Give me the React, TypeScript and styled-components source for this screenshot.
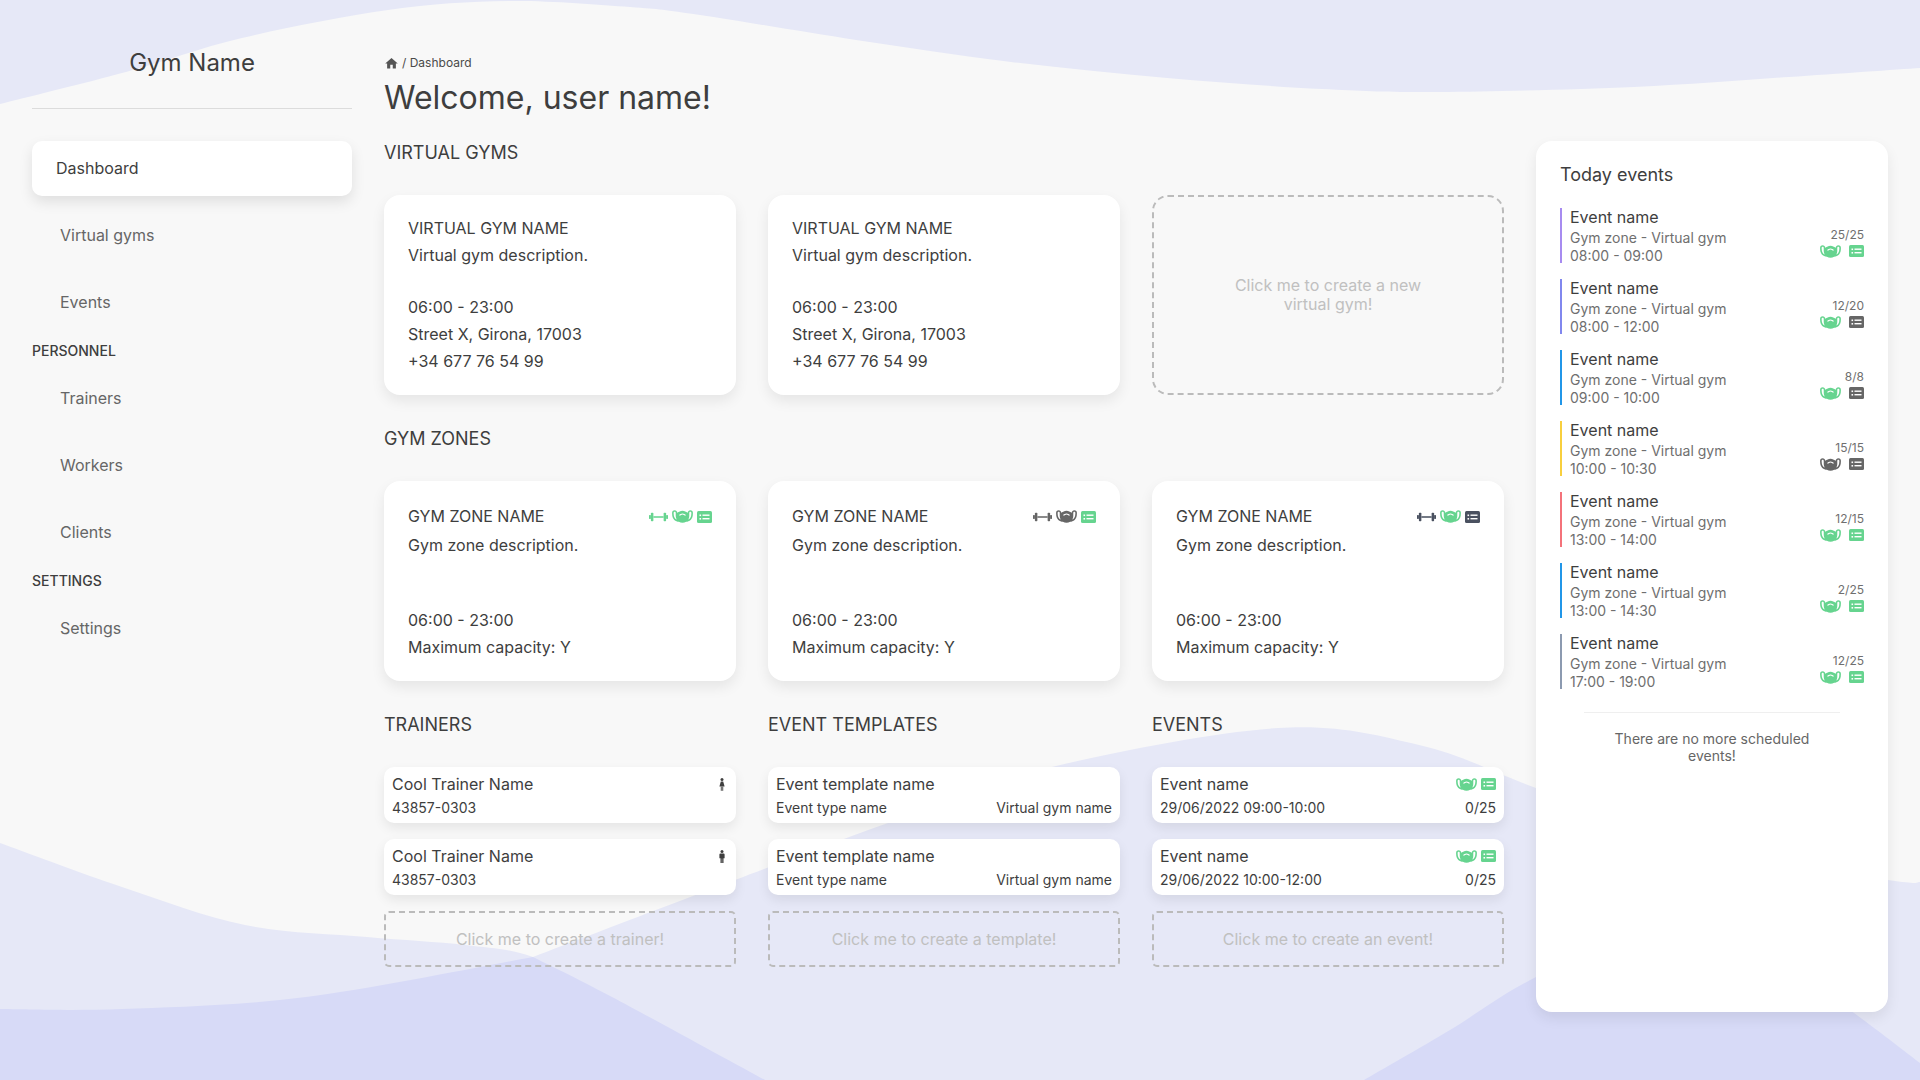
import styled, { createGlobalStyle } from "styled-components";
import { MdHome, MdMasks } from "react-icons/md";

const GREEN = "#66d48f";
const GREY = "#666666";
const SLATE = "#4a5160";

type Point = [number, number];

// turns a list of points into a smooth line, the waves are traced from the screenshot
function smooth(points: Point[]) {
  let d = `M${points[0][0]} ${points[0][1]}`;
  for (let i = 0; i < points.length - 1; i++) {
    const p0 = points[i - 1] || points[i];
    const p1 = points[i];
    const p2 = points[i + 1];
    const p3 = points[i + 2] || p2;
    const c1x = p1[0] + (p2[0] - p0[0]) / 6;
    const c1y = p1[1] + (p2[1] - p0[1]) / 6;
    const c2x = p2[0] - (p3[0] - p1[0]) / 6;
    const c2y = p2[1] - (p3[1] - p1[1]) / 6;
    d += ` C${c1x} ${c1y} ${c2x} ${c2y} ${p2[0]} ${p2[1]}`;
  }
  return d;
}

const topWave: Point[] = [
  [0, 104], [126, 72], [242, 38], [388, 10], [509, 1], [630, 7], [700, 15], [856, 40],
  [1011, 62], [1167, 78], [1322, 89], [1439, 92], [1634, 87], [1789, 77], [1920, 68],
];
const leftWave: Point[] = [
  [0, 843], [122, 887], [245, 925], [367, 937], [465, 945], [533, 957], [612, 997], [765, 1080],
];
const riseLeft: Point[] = [[0, 1009], [122, 1009], [306, 997], [533, 957]];
const riseRight: Point[] = [
  [533, 957], [735, 880], [888, 823], [1052, 767], [1278, 728], [1419, 745], [1536, 788],
  [1700, 850], [1888, 880], [1920, 882],
];
const darkRight: Point[] = [[1364, 1080], [1450, 1030], [1536, 977], [1700, 900], [1854, 1013], [1920, 1063]];

const GlobalStyle = createGlobalStyle`
  html, body {
    margin: 0;
    padding: 0;
    background: #f8f8f8;
  }
  body {
    font-family: "Inter", "Liberation Sans", sans-serif;
    color: #3e3e3e;
  }
  * {
    box-sizing: border-box;
  }
`;

const Page = styled.div`
  position: relative;
  width: 1920px;
  height: 1080px;
  overflow: hidden;
  display: flex;
  gap: 32px;
  padding: 0 32px;
`;

const Waves = styled.svg`
  position: absolute;
  top: 0;
  left: 0;
`;

// sidebar
const Sidebar = styled.aside`
  position: relative;
  width: 320px;
  padding-top: 48px;
`;

const Brand = styled.h1`
  margin: 0;
  font-size: 24px;
  line-height: 30px;
  font-weight: 400;
  text-align: center;
`;

const Divider = styled.hr`
  margin: 30px 0 32px;
  border: none;
  height: 1px;
  background: #dcdcdc;
`;

const NavItem = styled.div<{ $active?: boolean }>`
  height: 55px;
  margin-bottom: 12px;
  display: flex;
  align-items: center;
  font-size: 16px;
  padding-bottom: 1px;
  padding-left: ${(p) => (p.$active ? "24px" : "28px")};
  color: ${(p) => (p.$active ? "#3e3e3e" : "#666666")};
  background: ${(p) => (p.$active ? "#ffffff" : "transparent")};
  border-radius: ${(p) => (p.$active ? "10px" : "0")};
  box-shadow: ${(p) => (p.$active ? "0 6px 14px rgba(0, 0, 0, 0.1)" : "none")};
`;

const NavHeading = styled.div`
  font-size: 14px;
  line-height: 18px;
  font-weight: 500;
  margin: 0 0 11px;
`;

// main column
const Main = styled.main`
  position: relative;
  width: 1120px;
  padding-top: 55px;
`;

const Breadcrumb = styled.div`
  display: flex;
  align-items: center;
  gap: 3px;
  font-size: 12px;
  line-height: 16px;
  color: #4a4a4a;
`;

const Title = styled.h2`
  margin: 7px 0 23px;
  font-size: 32px;
  line-height: 40px;
  font-weight: 400;
`;

const SectionTitle = styled.h3`
  margin: 0 0 30px;
  font-size: 18px;
  line-height: 24px;
  font-weight: 400;
`;

const Grid = styled.div`
  display: grid;
  grid-template-columns: repeat(3, 352px);
  column-gap: 32px;
  margin-bottom: 32px;
`;

const Card = styled.div<{ $zone?: boolean }>`
  height: 200px;
  padding: ${(p) => (p.$zone ? "22px 24px 0" : "20px 24px 0")};
  background: #ffffff;
  border-radius: 16px;
  box-shadow: 0 6px 14px rgba(0, 0, 0, 0.08);
  font-size: 16px;
  line-height: 27px;
`;

const CardHead = styled.div`
  display: flex;
  justify-content: space-between;
  align-items: center;
  height: 27px;
  margin-bottom: 2px;
`;

const CardGap = styled.div<{ $size: number }>`
  height: ${(p) => p.$size}px;
`;

const AddCard = styled.div`
  height: 200px;
  display: flex;
  align-items: center;
  justify-content: center;
  padding: 0 80px;
  border: 2px dashed #bbbbbb;
  border-radius: 16px;
  color: #c0c0c0;
  font-size: 16px;
  line-height: 19px;
  text-align: center;
`;

const IconRow = styled.div<{ $gap?: number }>`
  display: flex;
  align-items: center;
  gap: ${(p) => p.$gap ?? 2}px;
`;

const Column = styled.div`
  display: flex;
  flex-direction: column;
`;

const Row = styled.div`
  height: 56px;
  margin-bottom: 16px;
  padding: 6px 8px 0;
  background: #ffffff;
  border-radius: 10px;
  box-shadow: 0 5px 12px rgba(0, 0, 0, 0.08);
`;

const RowLine = styled.div<{ $small?: boolean }>`
  display: flex;
  justify-content: space-between;
  align-items: center;
  font-size: ${(p) => (p.$small ? "14px" : "16px")};
  height: 22px;
  margin-bottom: ${(p) => (p.$small ? "0" : "1px")};
`;

const AddRow = styled.div`
  height: 56px;
  display: flex;
  align-items: center;
  justify-content: center;
  border: 2px dashed #bbbbbb;
  border-radius: 5px;
  color: #c0c0c0;
  font-size: 16px;
`;

const PersonIcon = styled.svg`
  margin-right: 3px;
`;

// today events
const Panel = styled.aside`
  position: relative;
  width: 352px;
  height: 871px;
  margin-top: 141px;
  padding: 22px 24px 0;
  background: #ffffff;
  border-radius: 16px;
  box-shadow: 0 6px 14px rgba(0, 0, 0, 0.08);
`;

const PanelTitle = styled.h3`
  margin: 0 0 21px;
  font-size: 18px;
  line-height: 24px;
  font-weight: 400;
`;

const TodayEvent = styled.div<{ $color: string }>`
  height: 55px;
  margin-bottom: 16px;
  padding-left: 8px;
  border-left: 2px solid ${(p) => p.$color};
  display: flex;
  justify-content: space-between;
`;

const EventName = styled.div`
  font-size: 16px;
  line-height: 19px;
  margin-bottom: 2px;
`;

const EventMeta = styled.div`
  font-size: 14px;
  line-height: 18px;
  color: #6f6f6f;
`;

const EventRight = styled.div`
  display: flex;
  flex-direction: column;
  align-items: flex-end;
  justify-content: flex-end;
  padding-bottom: 4px;
  font-size: 12px;
  line-height: 16px;
  color: #6f6f6f;
`;

const EventIcons = styled(IconRow)`
  height: 16px;
`;

const PanelDivider = styled.hr`
  margin: 23px 24px 0;
  border: none;
  height: 1px;
  background: #efefef;
`;

const PanelNote = styled.p`
  margin: 17px 40px 0;
  font-size: 14px;
  line-height: 17px;
  color: #666666;
  text-align: center;
`;

function Dumbbell({ color }: { color: string }) {
  return (
    <svg width="19" height="12" viewBox="0 0 20 12" fill={color}>
      <rect x="0" y="4" width="2" height="4" rx="0.6" />
      <rect x="2" y="1.5" width="2.6" height="9" rx="0.8" />
      <rect x="4.6" y="5.2" width="10.8" height="1.6" />
      <rect x="15.4" y="1.5" width="2.6" height="9" rx="0.8" />
      <rect x="18" y="4" width="2" height="4" rx="0.6" />
    </svg>
  );
}

const Mask = ({ color }: { color: string }) => <MdMasks size={25} color={color} />;

// filled card with two dotted lines
function List({ color }: { color: string }) {
  return (
    <svg width="15" height="12" viewBox="0 0 15 12">
      <rect width="15" height="12" rx="1.5" fill={color} />
      <rect x="2.5" y="3.5" width="1.6" height="1.6" fill="#ffffff" />
      <rect x="5.5" y="3.5" width="7" height="1.4" fill="#ffffff" />
      <rect x="2.5" y="7" width="1.6" height="1.6" fill="#ffffff" />
      <rect x="5.5" y="7" width="7" height="1.4" fill="#ffffff" />
    </svg>
  );
}

function Woman() {
  return (
    <PersonIcon width="6" height="13" viewBox="0 0 6 13" fill="#3e3e3e">
      <circle cx="3" cy="1.6" r="1.5" />
      <path d="M3 3.4 L4.2 3.6 L5.6 8.6 L0.4 8.6 L1.8 3.6 Z" />
      <rect x="1.8" y="8.6" width="0.9" height="4.2" />
      <rect x="3.3" y="8.6" width="0.9" height="4.2" />
    </PersonIcon>
  );
}

function Man() {
  return (
    <PersonIcon width="6" height="13" viewBox="0 0 6 13" fill="#3e3e3e">
      <circle cx="3" cy="1.6" r="1.5" />
      <path d="M1.4 3.4 H4.6 Q5.6 3.4 5.6 4.4 V8.2 H4.5 V13 H3.2 V8.6 H2.8 V13 H1.5 V8.2 H0.4 V4.4 Q0.4 3.4 1.4 3.4 Z" />
    </PersonIcon>
  );
}

const zones = [
  { dumbbell: GREEN, mask: GREEN, list: GREEN },
  { dumbbell: GREY, mask: GREY, list: GREEN },
  { dumbbell: SLATE, mask: GREEN, list: SLATE },
];

const todayEvents = [
  { bar: "#a78bf0", time: "08:00 - 09:00", count: "25/25", mask: GREEN, list: GREEN },
  { bar: "#8187ee", time: "08:00 - 12:00", count: "12/20", mask: GREEN, list: GREY },
  { bar: "#2196e8", time: "09:00 - 10:00", count: "8/8", mask: GREEN, list: GREY },
  { bar: "#f8cf3e", time: "10:00 - 10:30", count: "15/15", mask: GREY, list: GREY },
  { bar: "#f4727a", time: "13:00 - 14:00", count: "12/15", mask: GREEN, list: GREEN },
  { bar: "#2196e8", time: "13:00 - 14:30", count: "2/25", mask: GREEN, list: GREEN },
  { bar: "#8c9ab0", time: "17:00 - 19:00", count: "12/25", mask: GREEN, list: GREEN },
];

export default function App() {
  return (
    <Page>
      <GlobalStyle />
      <Waves width="1920" height="1080" viewBox="0 0 1920 1080">
        <path d={`${smooth(topWave)} L1920 0 L0 0 Z`} fill="#e6e8f7" />
        <path d={`${smooth(leftWave)} L0 1080 Z`} fill="#e6e8f7" />
        <path d={`${smooth(riseLeft)} ${smooth(riseRight).replace(/^M[^C]+/, "")} L1920 1080 L0 1080 Z`} fill="#e6e8f7" />
        <path d={`${smooth(riseLeft)} ${smooth([[533, 957], [612, 997], [765, 1080]]).replace(/^M[^C]+/, "")} L0 1080 Z`} fill="#d7daf7" />
        <path d={`${smooth(darkRight)} L1920 1080 Z`} fill="#d7daf7" />
      </Waves>

      <Sidebar>
        <Brand>Gym Name</Brand>
        <Divider />
        <NavItem $active>Dashboard</NavItem>
        <NavItem>Virtual gyms</NavItem>
        <NavItem>Events</NavItem>
        <NavHeading>PERSONNEL</NavHeading>
        <NavItem>Trainers</NavItem>
        <NavItem>Workers</NavItem>
        <NavItem>Clients</NavItem>
        <NavHeading>SETTINGS</NavHeading>
        <NavItem>Settings</NavItem>
      </Sidebar>

      <Main>
        <Breadcrumb>
          <MdHome size={15} color="#555555" />
          <span>/ Dashboard</span>
        </Breadcrumb>
        <Title>Welcome, user name!</Title>

        <SectionTitle>VIRTUAL GYMS</SectionTitle>
        <Grid>
          {[0, 1].map((i) => (
            <Card key={i}>
              <div>VIRTUAL GYM NAME</div>
              <div>Virtual gym description.</div>
              <CardGap $size={25} />
              <div>06:00 - 23:00</div>
              <div>Street X, Girona, 17003</div>
              <div>+34 677 76 54 99</div>
            </Card>
          ))}
          <AddCard>Click me to create a new virtual gym!</AddCard>
        </Grid>

        <SectionTitle>GYM ZONES</SectionTitle>
        <Grid>
          {zones.map((zone, i) => (
            <Card key={i} $zone>
              <CardHead>
                <span>GYM ZONE NAME</span>
                <IconRow>
                  <Dumbbell color={zone.dumbbell} />
                  <Mask color={zone.mask} />
                  <List color={zone.list} />
                </IconRow>
              </CardHead>
              <div>Gym zone description.</div>
              <CardGap $size={48} />
              <div>06:00 - 23:00</div>
              <div>Maximum capacity: Y</div>
            </Card>
          ))}
        </Grid>

        <Grid>
          <SectionTitle>TRAINERS</SectionTitle>
          <SectionTitle>EVENT TEMPLATES</SectionTitle>
          <SectionTitle>EVENTS</SectionTitle>
          <Column>
            <Row>
              <RowLine>
                <span>Cool Trainer Name</span>
                <Woman />
              </RowLine>
              <RowLine $small>43857-0303</RowLine>
            </Row>
            <Row>
              <RowLine>
                <span>Cool Trainer Name</span>
                <Man />
              </RowLine>
              <RowLine $small>43857-0303</RowLine>
            </Row>
            <AddRow>Click me to create a trainer!</AddRow>
          </Column>
          <Column>
            {[0, 1].map((i) => (
              <Row key={i}>
                <RowLine>Event template name</RowLine>
                <RowLine $small>
                  <span>Event type name</span>
                  <span>Virtual gym name</span>
                </RowLine>
              </Row>
            ))}
            <AddRow>Click me to create a template!</AddRow>
          </Column>
          <Column>
            {["29/06/2022 09:00-10:00", "29/06/2022 10:00-12:00"].map((date) => (
              <Row key={date}>
                <RowLine>
                  <span>Event name</span>
                  <IconRow>
                    <Mask color={GREEN} />
                    <List color={GREEN} />
                  </IconRow>
                </RowLine>
                <RowLine $small>
                  <span>{date}</span>
                  <span>0/25</span>
                </RowLine>
              </Row>
            ))}
            <AddRow>Click me to create an event!</AddRow>
          </Column>
        </Grid>
      </Main>

      <Panel>
        <PanelTitle>Today events</PanelTitle>
        {todayEvents.map((event) => (
          <TodayEvent key={event.time} $color={event.bar}>
            <div>
              <EventName>Event name</EventName>
              <EventMeta>Gym zone - Virtual gym</EventMeta>
              <EventMeta>{event.time}</EventMeta>
            </div>
            <EventRight>
              <span>{event.count}</span>
              <EventIcons $gap={6}>
                <Mask color={event.mask} />
                <List color={event.list} />
              </EventIcons>
            </EventRight>
          </TodayEvent>
        ))}
        <PanelDivider />
        <PanelNote>There are no more scheduled events!</PanelNote>
      </Panel>
    </Page>
  );
}
